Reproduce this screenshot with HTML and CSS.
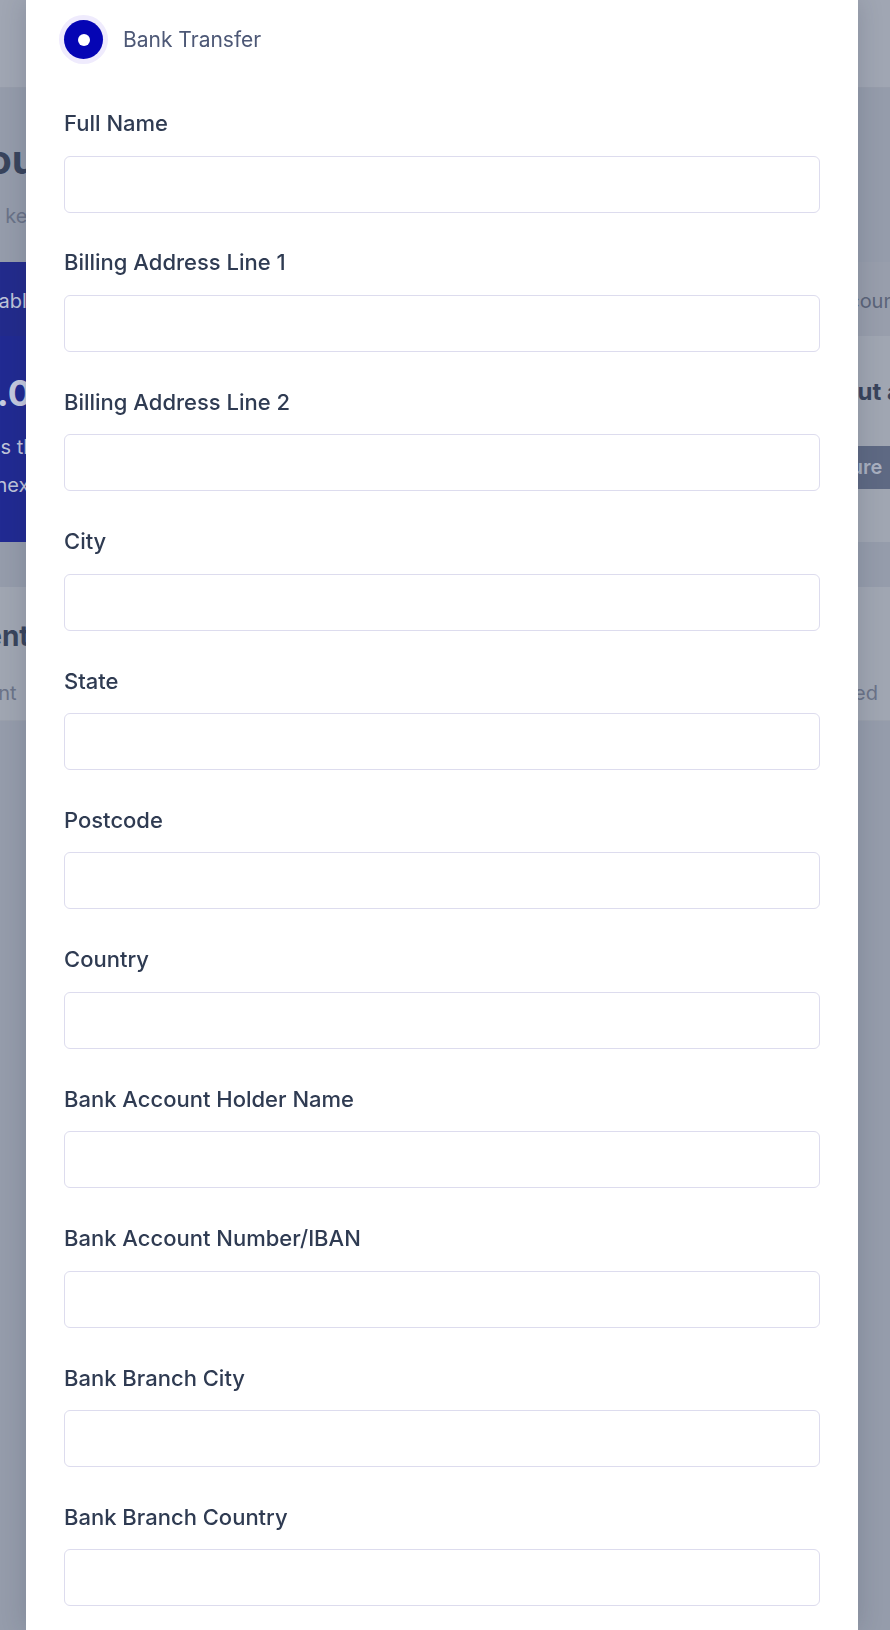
FILE: index.html
```html
<!DOCTYPE html>
<html lang="en">
<head>
<meta charset="utf-8">
<title>Payout method</title>
<link rel="stylesheet" href="styles.css">
</head>
<body>
<div class="backdrop-page">
  <header class="topbar"></header>
  <main class="main">
    <h1 class="page-title">Payouts</h1>
    <p class="page-sub">View, keep track of and withdraw your earnings.</p>
    <div class="cards">
      <section class="card card-blue">
        <div class="card-tab">Available balance</div>
        <div class="card-body">
          <div class="amount">$0.00</div>
          <p class="card-text">This is the amount you will receive<br>until next payout.</p>
        </div>
      </section>
      <section class="card card-plain">
        <div class="card-tab">Payout account</div>
        <div class="card-body">
          <h3 class="card-heading">Payout account</h3>
          <span class="btn-configure">Configure</span>
        </div>
      </section>
    </div>
    <section class="history">
      <h2 class="history-title">Recent payouts</h2>
      <div class="table-head"><span>Amount</span><span>Requested</span></div>
    </section>
  </main>
</div>

<div class="overlay">
  <div class="modal">
    <label class="method">
      <span class="radio"><span class="radio-dot"></span></span>
      <span class="method-name">Bank Transfer</span>
    </label>

    <form class="form">
      <div class="field"><label class="field-label">Full Name</label><input class="field-input" type="text"></div>
      <div class="field"><label class="field-label">Billing Address Line 1</label><input class="field-input" type="text"></div>
      <div class="field"><label class="field-label">Billing Address Line 2</label><input class="field-input" type="text"></div>
      <div class="field"><label class="field-label">City</label><input class="field-input" type="text"></div>
      <div class="field"><label class="field-label">State</label><input class="field-input" type="text"></div>
      <div class="field"><label class="field-label">Postcode</label><input class="field-input" type="text"></div>
      <div class="field"><label class="field-label">Country</label><input class="field-input" type="text"></div>
      <div class="field"><label class="field-label">Bank Account Holder Name</label><input class="field-input" type="text"></div>
      <div class="field"><label class="field-label">Bank Account Number/IBAN</label><input class="field-input" type="text"></div>
      <div class="field"><label class="field-label">Bank Branch City</label><input class="field-input" type="text"></div>
      <div class="field"><label class="field-label">Bank Branch Country</label><input class="field-input" type="text"></div>
    </form>
  </div>
</div>
</body>
</html>
```

FILE: styles.css
```css
* { box-sizing: border-box; }

html, body {
  margin: 0;
  height: 100%;
}

body {
  background: #959cab;
  font-family: Inter, "Noto Sans", sans-serif;
  overflow: hidden;
}

/* ---------- dimmed page behind the modal ---------- */
.backdrop-page {
  width: 890px;
  height: 1630px;
  overflow: hidden;
}

.topbar {
  height: 88px;
  background: #a0a6b3;
  border-bottom: 1px solid #979dab;
}

.main {
  margin-left: -66px;
  width: 1400px;
}

.page-title {
  margin: 48px 0 0 -18px;
  font-size: 40px;
  line-height: 48px;
  font-weight: 700;
  color: #39445c;
  white-space: nowrap;
}

.page-sub {
  margin: 18px 0 0 15px;
  font-size: 20px;
  line-height: 28px;
  color: #6a7388;
  white-space: nowrap;
}

.cards {
  margin-top: 32px;
  display: grid;
  grid-template-columns: 520px 600px;
  gap: 220px;
}

.card-blue {
  background: #212a92;
  height: 280px;
}

.card-blue .card-tab {
  height: 74px;
  padding: 27px 0 0 20px;
  background: #232b8c;
  color: #bfc4d9;
  font-size: 20px;
  white-space: nowrap;
}

.card-blue .card-body {
  padding: 35px 0 0 16px;
}

.amount {
  font-size: 36px;
  line-height: 44px;
  font-weight: 700;
  color: #c6cadf;
}

.card-text {
  margin: 13px 0 0 0;
  font-size: 20px;
  line-height: 38px;
  color: #bfc4d9;
  white-space: nowrap;
}

.card-plain {
  background: #a0a6b2;
  height: 280px;
}

.card-plain .card-tab {
  height: 74px;
  padding: 27px 0 0 81px;
  background: #989eac;
  color: #5b6479;
  font-size: 20px;
  white-space: nowrap;
}

.card-plain .card-body {
  padding: 38px 0 0 0;
}

.card-heading {
  margin: 0 0 0 126px;
  font-size: 24px;
  line-height: 36px;
  font-weight: 700;
  color: #39445c;
  white-space: nowrap;
}

.btn-configure {
  display: block;
  width: fit-content;
  margin: 36px 0 0 84px;
  height: 43px;
  padding: 9px 24px 0 28px;
  background: #5e6983;
  color: #a9b0c0;
  font-size: 20px;
  font-weight: 600;
  white-space: nowrap;
}

.history {
  margin-top: 45px;
  background: #a0a6b2;
  height: 134px;
  border-bottom: 1px solid #9aa0ac;
  padding: 29px 0 0 1px;
}

.history-title {
  margin: 0 0 0 -1px;
  font-size: 28px;
  line-height: 40px;
  font-weight: 700;
  color: #39445c;
  white-space: nowrap;
}

.table-head {
  margin: 25px 0 0 8px;
  display: flex;
  justify-content: space-between;
  width: 935px;
  font-size: 20px;
  color: #6b7388;
}

/* ---------- modal ---------- */
.overlay {
  position: fixed;
  inset: 0;
  padding-left: 26px;
}

.modal {
  width: 832px;
  height: 100%;
  background: #ffffff;
  padding: 20px 38px 0 38px;
  box-shadow: 0 0 24px rgba(30, 38, 60, 0.18);
}

.method {
  display: flex;
  align-items: center;
  gap: 20px;
}

.radio {
  width: 39px;
  height: 39px;
  border-radius: 50%;
  background: #0505b4;
  box-shadow: 0 0 0 5px #efebfd;
  display: grid;
  place-items: center;
  flex: none;
}

.radio-dot {
  width: 12px;
  height: 12px;
  border-radius: 50%;
  background: #ffffff;
}

.method-name {
  font-size: 21px;
  line-height: 30px;
  color: #4d5876;
}

.form {
  margin-top: 49px;
  display: flex;
  flex-direction: column;
  gap: 34.9px;
}

.field {
  display: flex;
  flex-direction: column;
}

.field-label {
  font-size: 22px;
  line-height: 30px;
  font-weight: 500;
  color: #2f3b52;
  margin-bottom: 17.5px;
}

.field-input {
  height: 57px;
  width: 100%;
  border: 1px solid #dddcee;
  border-radius: 6px;
  background: #ffffff;
  font: inherit;
  padding: 0 16px;
  outline: none;
}
```
